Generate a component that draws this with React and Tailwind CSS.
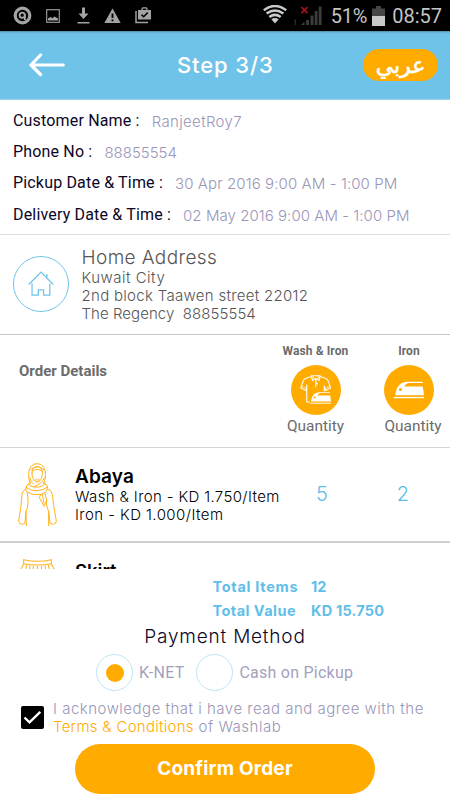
import { clsx } from 'clsx'

const CUSTOMER = [
  { label: 'Customer Name :', value: 'RanjeetRoy7', tracking: 'tracking-[0.35px]' },
  { label: 'Phone No :', value: '88855554', tracking: 'tracking-[0px]' },
  { label: 'Pickup Date & Time :', value: '30 Apr 2016 9:00 AM - 1:00 PM', tracking: 'tracking-[0.1px]' },
  { label: 'Delivery Date & Time :', value: '02 May 2016 9:00 AM - 1:00 PM', tracking: 'tracking-[0.05px]' },
]

function StatusBar() {
  return (
    <div className="h-[31px] flex-shrink-0 bg-black flex items-center pl-[13px] pr-[8px] text-[#c4c4c4]">
      <svg className="w-[19px] h-[19px]" viewBox="0 0 19 19" fill="none" stroke="#a3a3a3">
        <circle cx="9.5" cy="9.5" r="7.3" strokeWidth="3.2" />
        <circle cx="9.2" cy="9.2" r="2.6" strokeWidth="1.9" />
        <path d="M11.9 8.2V14" strokeWidth="1.9" />
      </svg>
      <svg className="w-[14px] h-[14px] ml-[14px]" viewBox="0 0 14 14">
        <rect x="0.7" y="0.7" width="12.6" height="12.6" fill="none" stroke="#a3a3a3" strokeWidth="1.1" />
        <path d="M2 11.5V9.5L4.5 8L6.5 9.2L8.5 7.6L12 9.6V11.5Z" fill="#a3a3a3" />
      </svg>
      <svg className="w-[13px] h-[17px] ml-[17px]" viewBox="0 0 13 17" fill="#a3a3a3">
        <path d="M5 0.5H8V6.5H11.5L6.5 12L1.5 6.5H5ZM0.5 15H12.5V16.6H0.5Z" />
      </svg>
      <svg className="w-[17px] h-[16px] ml-[14px]" viewBox="0 0 17 16">
        <path d="M8.5 0.5L16.7 15H0.3Z" fill="#a3a3a3" />
        <path d="M8.5 5.5V10M8.5 11.4V13.2" stroke="#000" strokeWidth="1.9" />
      </svg>
      <svg className="w-[17px] h-[17px] ml-[14px] mb-[1px]" viewBox="0 0 17 17">
        <path d="M1 4V15.6H13" fill="none" stroke="#a3a3a3" strokeWidth="1.5" />
        <path d="M3 3H6.5V1.2L7.5 0.3H11.5L12.5 1.2V3H16V12.6H3ZM7.8 3H11.2V1.6H7.8Z" fill="#a3a3a3" fillRule="evenodd" />
        <path d="M6.5 7.6L8.6 9.7L12.7 5.6" fill="none" stroke="#000" strokeWidth="1.5" />
      </svg>

      <svg className="w-[24px] h-[19px] ml-auto mb-[2px]" viewBox="0 0 24 19" fill="none" stroke="#c9c9c9" strokeWidth="2.5">
        <path d="M0.8 5.2Q12 -3.2 23.2 5.2M3.6 8.6Q12 2.4 20.4 8.6M6.3 12Q12 7.8 17.7 12" />
        <path d="M12 18.6L8.3 14.2Q12 11.9 15.7 14.2Z" fill="#c9c9c9" stroke="none" />
      </svg>
      <svg className="w-[28px] h-[20px] ml-[7px]" viewBox="0 0 28 20">
        <path d="M0.3 14.5L1.2 13.8V19" fill="none" stroke="#444" strokeWidth="0.8" />
        <path d="M7 19L10.5 15.5V19ZM12 14H15V19H12ZM16.5 9.5H19.5V19H16.5ZM20.7 5H23.5V19H20.7ZM24.7 0.5H27.6V19H24.7Z" fill="#3c3c3c" />
        <path d="M7.5 1.2L13.5 7.2M13.5 1.2L7.5 7.2" stroke="#a81414" strokeWidth="1.7" />
      </svg>
      <span className="ml-[9px] mt-[1px] text-[20px] leading-[30px] tracking-[-0.2px]">51%</span>
      <svg className="w-[13px] h-[20px] ml-[5px]" viewBox="0 0 13 20">
        <path d="M4 0H9V2.5H13V10.5H0V2.5H4Z" fill="#464646" />
        <path d="M0 10H13V20H0Z" fill="#c9c9c9" />
      </svg>
      <span className="ml-[7px] mt-[1px] text-[20px] leading-[30px] tracking-[0px]">08:57</span>
    </div>
  )
}

function Header() {
  return (
    <header className="h-[69px] flex-shrink-0 bg-[#6fc3e8] border-b border-[#9ed2e8] flex items-center shadow-[inset_0_3px_2px_-2px_rgba(0,0,0,0.3)]">
      <svg className="w-[36px] h-[24px] ml-[29px]" viewBox="0 0 36 24" fill="none" stroke="#fff" strokeWidth="3.2" strokeLinecap="round" strokeLinejoin="round">
        <path d="M34.3 12H2.5M11.5 2L2 12L11.5 21.5" />
      </svg>
      <h1 className="w-[98px] ml-[112px] font-['Inter'] font-medium text-[22px] tracking-[0.9px] text-white whitespace-nowrap">Step 3/3</h1>
      <button className="w-[75px] h-[32px] ml-[88px] pt-[2px] rounded-full bg-[#ffab00] text-white font-['DejaVu_Sans'] text-[22px] leading-[30px] [-webkit-text-stroke:0.6px_#fff]">
        عربي
      </button>
    </header>
  )
}

function IronShape() {
  return (
    <g>
      <path d="M34 90C36 70 44 51 70 50H112Q116 50 116 54H76Q64 55 61 64H115Q118 76 119 90Z" fill="#fff" />
      <path d="M29 95H119V99H29Z" fill="#fff" />
      <circle cx="49" cy="73" r="4.5" fill="#ffab00" />
    </g>
  )
}

function ShirtIron() {
  return (
    <svg className="w-[50px] h-[50px]" viewBox="0 0 149 149">
      <circle cx="74.5" cy="74.5" r="74.5" fill="#ffab00" />
      <g fill="none" stroke="#fff" strokeWidth="3.2" strokeLinejoin="round">
        <path d="M47 58V110H56M60 34L43 40Q37 43 35 51L29 68L44 76L48 62M87 34L104 40Q110 43 112 51L118 68L103 76L99 62V78" />
        <path d="M60 32H87L84 46L74 40L64 46ZM66 34V40M81 34V40M74 40V66M74 52L80 58" />
        <path d="M32 63L46 70M115 63L101 70" strokeWidth="2" />
      </g>
      <g transform="translate(36 46) scale(0.7)">
        <path d="M28 92L37 70L60 48H118V99H28Z" fill="#ffab00" />
        <IronShape />
      </g>
    </svg>
  )
}

function Iron() {
  return (
    <svg className="w-[50px] h-[50px]" viewBox="0 0 149 149">
      <circle cx="74.5" cy="74.5" r="74.5" fill="#ffab00" />
      <IronShape />
    </svg>
  )
}

function AbayaIcon() {
  return (
    <svg className="w-[39px] h-[64px]" viewBox="0 0 117 192" fill="none" stroke="#ffb21c" strokeWidth="3" strokeLinecap="round" strokeLinejoin="round">
      <path d="M37 62C28 42 28 2 57 2C86 2 87 42 77 62" />
      <path d="M42 30C42 4 73 4 73 30C73 66 42 66 42 30Z" />
      <path d="M42 25Q57 13 73 25M38 20Q57 2 77 20" />
      <path d="M51 50Q57 46 64 50L61 54H54Z" strokeWidth="2" />
      <path d="M36 44Q37 57 46 63M80 44Q70 64 48 71M37 57Q28 63 24 73Q38 84 57 83Q78 82 89 71Q85 63 77 58M31 65Q46 76 63 72Q77 69 82 62" />
      <path d="M24 73Q20 79 27 87Q47 99 69 94Q87 90 89 71M68 95L64 104L78 130L86 112L80 88M73 94L78 120" />
      <path d="M24 78Q14 81 12 94L9 128L2 174Q2 183 13 184L21 180L24 146Q34 124 28 91M24 146L25 188" />
      <path d="M89 78Q101 81 103 94L107 128L115 174Q114 183 106 184L96 180L92 146Q83 124 86 112M92 146V188" />
    </svg>
  )
}

function SkirtIcon() {
  return (
    <svg className="w-[37px] h-[40px]" viewBox="0 0 111 120" fill="none" stroke="#ffb21c" strokeWidth="3.2">
      <path d="M14 2Q55 12 97 2V14Q55 22 14 14ZM14 14L1 40L-20 110M97 14L110 40L130 110" />
      <path d="M23 18L16 50M33 20L28 50M43 21L41 50M55 21V50M67 21L69 50M78 20L82 50M88 18L95 50" />
    </svg>
  )
}

function QuantityColumn({ title, className, labelClass, children }) {
  return (
    <div className={clsx('flex flex-col items-center text-[#6b6b6b]', className)}>
      <span className="text-[12px] leading-[14px] font-bold mb-[7px] whitespace-nowrap tracking-[0.1px]">{title}</span>
      {children}
      <span className={clsx('text-[15.4px] leading-[18px] mt-[2px]', labelClass)}>Quantity</span>
    </div>
  )
}

function PaymentOption({ label, selected }) {
  return (
    <label className="flex items-center text-[#a39fbd]">
      <span className="w-[37px] h-[37px] rounded-full border border-[#bfe4f6] flex items-center justify-center">
        {selected && <span className="w-[18px] h-[18px] rounded-full bg-[#ffab00]" />}
      </span>
      <span className="ml-[6px] mt-[1px] text-[16px] leading-5 tracking-[0.25px]">{label}</span>
    </label>
  )
}

export default function App() {
  return (
    <div className="w-[450px] h-[800px] bg-white flex flex-col overflow-hidden font-['Roboto',sans-serif]">
      <StatusBar />
      <Header />

      <section className="h-[135px] flex-shrink-0 border-b border-[#dcdcdc] pl-[13px] pt-[5px]">
        {CUSTOMER.map(row => (
          <div key={row.label} className="h-[31.3px] flex items-center whitespace-nowrap">
            <span className="text-[16px] tracking-[0.17px] text-[#0c0626]">{row.label}</span>
            <span className={clsx("ml-[12px] font-['Inter'] font-light text-[15px] text-[#9a96b8] pt-[3px]", row.tracking)}>
              {row.value}
            </span>
          </div>
        ))}
      </section>

      <section className="h-[100px] flex-shrink-0 border-b border-[#c8c8c8] flex pl-[13px] pt-[11px]">
        <div className="w-[56px] h-[56px] mt-[10px] rounded-full border-[1.5px] border-[#6fc3e8] flex items-center justify-center">
          <svg className="w-[26px] h-[26px]" viewBox="0 0 27 27" fill="none" stroke="#6fc3e8" strokeWidth="1.3">
            <path d="M0.8 14L13.5 1.2L26.2 14M19.6 7V3.2M4.2 13V25H10.7V19.6H16.2V25H22.6V13" />
          </svg>
        </div>
        <div className="ml-[12.5px] font-['Inter'] font-light text-[#555] whitespace-nowrap">
          <h2 className="text-[19px] leading-[23px] tracking-[0.4px]">Home Address</h2>
          <p className="text-[15px] leading-[18px] tracking-[0.5px]">Kuwait City</p>
          <p className="text-[15px] leading-[18px] tracking-[0.3px]">2nd block Taawen street 22012</p>
          <p className="text-[15px] leading-[18px] tracking-[0.05px]">The Regency&nbsp; 88855554</p>
        </div>
      </section>

      <section className="h-[113px] flex-shrink-0 border-b border-[#d4d4d4] flex pt-[9px]">
        <h2 className="w-[262px] pl-[19px] pt-[19px] text-[15px] leading-[17px] font-bold text-[#6b6b6b]">Order Details</h2>
        <QuantityColumn title="Wash & Iron" className="w-[107px]">
          <ShirtIron />
        </QuantityColumn>
        <QuantityColumn title="Iron" className="w-[80px]" labelClass="pl-[8px]">
          <Iron />
        </QuantityColumn>
      </section>

      {/* scrolling list, the second item runs under the footer */}
      <section className="h-[121px] flex-shrink-0 overflow-hidden font-['Inter']">
        <div className="h-[95px] border-b-2 border-[#cfcfcf] flex">
          <div className="w-[75px] pl-[18px] pt-[15px]">
            <AbayaIcon />
          </div>
          <div className="w-[227px] pt-[17px] whitespace-nowrap text-black">
            <h3 className="text-[19px] leading-[23px] font-semibold tracking-[0.1px]">Abaya</h3>
            <p className="text-[15px] leading-[18px] font-light tracking-[0.36px]">Wash &amp; Iron - KD 1.750/Item</p>
            <p className="text-[15px] leading-[18px] font-light tracking-[0.43px]">Iron - KD 1.000/Item</p>
          </div>
          <span className="w-[40px] pt-[32px] text-center text-[20px] leading-[28px] font-light text-[#5cbde8]">5</span>
          <span className="w-[40px] ml-[41px] pt-[32px] text-center text-[20px] leading-[28px] font-light text-[#5cbde8]">2</span>
        </div>
        <div className="flex">
          <div className="w-[75px] pl-[19px] pt-[16px]">
            <SkirtIcon />
          </div>
          <h3 className="pt-[17px] text-[18.5px] leading-[22px] font-semibold text-black">Skirt</h3>
        </div>
      </section>

      <footer className="flex-1 flex flex-col pt-[6px]">
        <div className="grid grid-cols-[98.5px_1fr] pl-[212.5px] font-['Inter'] font-bold text-[14.5px] leading-[24px] text-[#62bee8] whitespace-nowrap">
          <span className="tracking-[0.7px]">Total Items</span>
          <span>12</span>
          <span className="tracking-[0.45px]">Total Value</span>
          <span className="tracking-[0.2px]">KD 15.750</span>
        </div>
        <h2 className="text-center font-['Inter'] font-light text-[19px] leading-[26px] mt-[1px] tracking-[0.8px] text-[#0c0626]">Payment Method</h2>
        <div className="flex pl-[96px] gap-[12px] mt-[4px]">
          <PaymentOption label="K-NET" selected />
          <PaymentOption label="Cash on Pickup" />
        </div>
        <div className="flex pl-[21px] mt-[9px]">
          <span className="w-[23px] h-[23px] mt-[6px] rounded-[2px] bg-black flex items-center justify-center">
            <svg className="w-[19px] h-[15px]" viewBox="0 0 19 15" fill="none" stroke="#fff" strokeWidth="2.4">
              <path d="M1.5 7.5L6.5 12.3L17.3 1.8" />
            </svg>
          </span>
          <p className="ml-[9px] font-['Inter'] font-light text-[15px] leading-[18px] text-[#9a96b8] tracking-[0.5px] whitespace-nowrap">
            I acknowledge that i have read and agree with the
            <br />
            <span className="text-[#ffab00] tracking-[0.28px]">Terms &amp; Conditions</span> of Washlab
          </p>
        </div>
        <button className="w-[300px] h-[50px] mt-[8px] ml-[75px] rounded-full bg-[#ffab00] text-white font-['Inter'] font-bold text-[19px] tracking-[0.2px]">
          Confirm Order
        </button>
      </footer>
    </div>
  )
}
